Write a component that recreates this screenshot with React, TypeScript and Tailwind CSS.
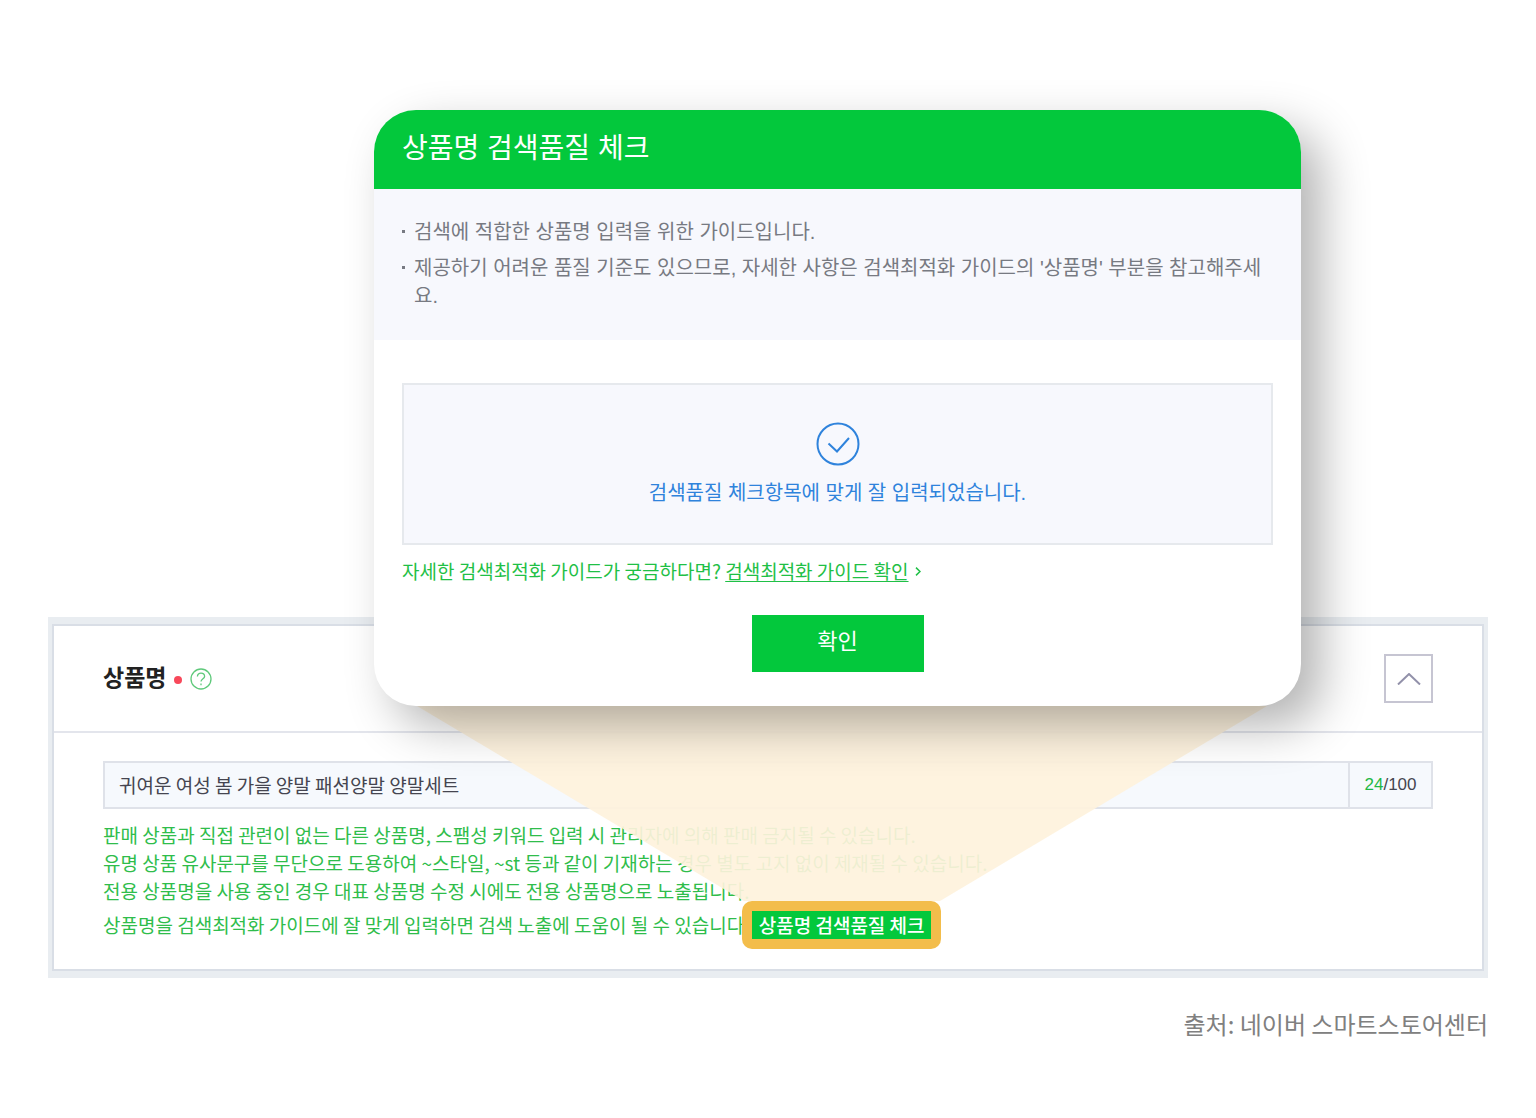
const guides = [
  "검색에 적합한 상품명 입력을 위한 가이드입니다.",
  "제공하기 어려운 품질 기준도 있으므로, 자세한 사항은 검색최적화 가이드의 '상품명' 부분을 참고해주세요.",
];

const notices = [
  "판매 상품과 직접 관련이 없는 다른 상품명, 스팸성 키워드 입력 시 관리자에 의해 판매 금지될 수 있습니다.",
  "유명 상품 유사문구를 무단으로 도용하여 ~스타일, ~st 등과 같이 기재하는 경우 별도 고지 없이 제재될 수 있습니다.",
  "전용 상품명을 사용 중인 경우 대표 상품명 수정 시에도 전용 상품명으로 노출됩니다.",
];

function QualityDialog() {
  return (
    <div
      role="dialog"
      aria-labelledby="dialog-title"
      className="relative z-20 w-full max-w-[927px] overflow-hidden rounded-[42px] bg-white shadow-[20px_20px_48px_rgba(0,0,0,0.3)] font-['Liberation_Sans','Noto_Sans_CJK_KR',sans-serif]"
    >
      <header className="bg-[#03c83c] px-7 pt-[17px] pb-[19px]">
        <h2 id="dialog-title" className="text-[28px] leading-[43px] text-white">
          상품명 검색품질 체크
        </h2>
      </header>

      <ul className="space-y-2 bg-[#f7f8fd] px-7 pt-[29px] pb-[30px] text-[20px] leading-7 text-[#777a82]">
        {guides.map((guide) => (
          <li key={guide} className="flex">
            <span className="mt-3 mr-[9px] h-[3px] w-[3px] shrink-0 bg-[#777a82]" />
            {guide}
          </li>
        ))}
      </ul>

      <div className="flex flex-col px-7 pt-[43px] pb-[34px]">
        <div className="flex flex-col items-center border-2 border-[#e6e9ed] bg-[#f7f8fd] pt-[37px] pb-9 text-[#2f83dc]">
          <svg className="h-11 w-11" viewBox="0 0 44 44" fill="none" stroke="currentColor" strokeWidth={2}>
            <circle cx="22" cy="22" r="20.5" />
            <path d="M12.5 21.5L21 29.5L33 16" />
          </svg>
          <p className="mt-[13px] text-[20px] leading-7">검색품질 체크항목에 맞게 잘 입력되었습니다.</p>
        </div>

        {/* Guide link */}
        <p className="mt-3 flex items-center text-[19px] leading-7 text-[#1fc046] font-['Noto_Sans_CJK_KR',sans-serif]">
          <span className="whitespace-pre">자세한 검색최적화 가이드가 궁금하다면? </span>
          <a href="#guide" className="flex items-center gap-1.5">
            <span className="underline underline-offset-2">검색최적화 가이드 확인</span>
            <svg className="h-[9px] w-1.5" viewBox="0 0 6 9" fill="none" stroke="currentColor" strokeWidth={1.5}>
              <path d="M1 0.6L5 4.5L1 8.4" />
            </svg>
          </a>
        </p>

        <button type="button" className="mt-[30px] h-[57px] w-[172px] self-center bg-[#03c83c] pb-1 text-[22px] text-white">
          확인
        </button>
      </div>
    </div>
  );
}

function ProductNamePanel() {
  return (
    <section className="-mt-[89px] bg-[#e9edf1] px-1 py-[7px]">
      <div className="border-2 border-[#d9dee6] bg-white">
        <header className="flex items-center justify-between border-b-2 border-[#e3e5ec] px-[49px] py-7">
          <div className="flex items-center gap-2">
            <label htmlFor="product-name" className="pb-1 text-[23px] font-bold text-[#222]">
              상품명
            </label>
            <span className="mt-0.5 h-2 w-2 rounded-full bg-[#f8485a]" />
            <button type="button" aria-label="도움말" className="text-[#5fc97b]">
              <svg className="h-[22px] w-[22px]" viewBox="0 0 22 22" fill="none" stroke="currentColor" strokeWidth={1.3}>
                <circle cx="11" cy="11" r="10" />
                <path d="M7.4 8.6C7.4 6.4 9 5.2 11 5.2S14.6 6.5 14.6 8.4C14.6 10.6 11 10.9 11 13.6" />
                <path d="M11 15.6V17.2" />
              </svg>
            </button>
          </div>
          <button
            type="button"
            aria-label="접기"
            className="flex h-[49px] w-[49px] items-center justify-center border-2 border-[#c6c5d2] text-[#9291aa]"
          >
            <svg className="h-3 w-6" viewBox="0 0 24 12" fill="none" stroke="currentColor" strokeWidth={2}>
              <path d="M1 11.5L12 1L23 11.5" />
            </svg>
          </button>
        </header>

        <div className="px-[49px] pt-7 pb-5">
          <div className="flex h-12 border-2 border-[#dfe2e9] bg-[#f6f9fd] text-[#454550]">
            <input
              id="product-name"
              type="text"
              defaultValue="귀여운 여성 봄 가을 양말 패션양말 양말세트"
              className="min-w-0 flex-1 px-[14px] text-[19px] outline-none"
            />
            <span className="flex w-[83px] items-center justify-center border-l-2 border-[#dfe2e9] text-[17px] font-['Liberation_Sans',sans-serif]">
              <span className="text-[#1fb845]">24</span>/100
            </span>
          </div>

          <div className="mt-3 text-[19px] leading-7 text-[#2fbd4b]">
            {notices.map((notice) => (
              <p key={notice}>{notice}</p>
            ))}
            <div className="-mt-1 flex items-center">
              <p>상품명을 검색최적화 가이드에 잘 맞게 입력하면 검색 노출에 도움이 될 수 있습니다</p>
              <div className="relative -ml-0.5 shrink-0 rounded-[10px] bg-[#f3bd4b] p-[10px]">
                {/* Beam from the button up to the dialog */}
                <svg
                  className="pointer-events-none absolute bottom-full left-1/2 z-10 h-[195px] w-[850px] max-w-none -translate-x-1/2"
                  viewBox="0 0 850 195"
                >
                  <path d="M0 0H850L523 195H327Z" fill="#fef2dc" fillOpacity={0.92} />
                </svg>
                <button type="button" className="block w-[179px] bg-[#03c83c] text-[19px] leading-7 font-medium text-white">
                  상품명 검색품질 체크
                </button>
              </div>
            </div>
          </div>
        </div>
      </div>
    </section>
  );
}

export default function App() {
  return (
    <main className="min-h-screen bg-white px-12 pt-[110px] pb-[72px] font-['Noto_Sans_CJK_KR',sans-serif]">
      <div className="flex justify-center pl-[139px]">
        <QualityDialog />
      </div>
      <ProductNamePanel />
      <p className="mt-7 text-right text-[24px] leading-9 text-[#808080]">출처: 네이버 스마트스토어센터</p>
    </main>
  );
}
